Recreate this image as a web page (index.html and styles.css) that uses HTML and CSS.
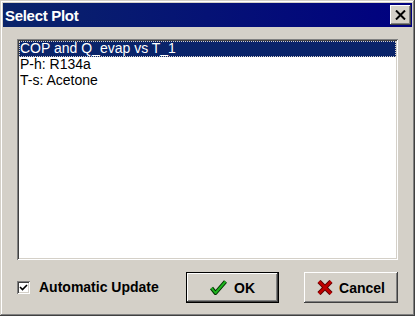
FILE: index.html
```html
<!DOCTYPE html>
<html>
<head>
    <title>Select Plot</title>
    <link rel="stylesheet" href="styles.css">
</head>
<body>
    <div class="window">
        <div class="titlebar">
            <span class="title">Select Plot</span>
            <button class="close-btn" type="button">
                <svg width="11" height="10" viewBox="0 0 11 10">
                    <path d="M1 0.5 L10 9.5 M10 0.5 L1 9.5" stroke="#000" stroke-width="2" fill="none"/>
                </svg>
            </button>
        </div>

        <div class="content">
            <div class="listbox">
                <div class="item selected">COP and Q_evap vs T_1</div>
                <div class="item">P-h: R134a</div>
                <div class="item">T-s: Acetone</div>
            </div>

            <div class="bottom-row">
                <label class="check">
                    <span class="check-box">
                        <svg width="9" height="9" viewBox="0 0 9 9">
                            <path d="M1 4 L3.5 6.5 L8 2" stroke="#000" stroke-width="1.6" fill="none"/>
                        </svg>
                    </span>
                    Automatic Update
                </label>

                <button class="win-btn default" type="button">
                    <svg width="17" height="15" viewBox="0 0 17 15">
                        <path d="M1.5 8 L5.5 13 L15.5 1.5" stroke="#003000" stroke-width="4" fill="none" stroke-linejoin="round"/>
                        <path d="M1.5 8 L5.5 13 L15.5 1.5" stroke="#1eb41e" stroke-width="2" fill="none" stroke-linejoin="round"/>
                    </svg>
                    OK
                </button>
                <button class="win-btn cancel" type="button">
                    <svg width="16" height="15" viewBox="0 0 16 15">
                        <path d="M2 1.5 L14 13.5 M14 1.5 L2 13.5" stroke="#5a0000" stroke-width="4.5" fill="none"/>
                        <path d="M2 1.5 L14 13.5 M14 1.5 L2 13.5" stroke="#c00000" stroke-width="2.5" fill="none"/>
                    </svg>
                    Cancel
                </button>
            </div>
        </div>
    </div>
</body>
</html>
```

FILE: styles.css
```css
body {
    margin: 0;
    background-color: #d4d0c8;
    font-family: "Liberation Sans", Arial, sans-serif;
    font-size: 14px;
}

.window {
    width: 415px;
    height: 316px;
    box-sizing: border-box;
    padding: 3px;
    background-color: #d4d0c8;
    box-shadow: inset -1px -1px #404040, inset 1px 1px #d4d0c8,
                inset -2px -2px #808080, inset 2px 2px #ffffff;
}

.titlebar {
    height: 24px;
    display: flex;
    align-items: center;
    justify-content: space-between;
    padding: 0 1px 0 2px;
    background: linear-gradient(to right, #0a246a, #000080);
}

.title {
    color: #ffffff;
    font-weight: bold;
    font-size: 15px;
    letter-spacing: -0.3px;
}

.close-btn {
    width: 21px;
    height: 20px;
    padding: 0;
    border: none;
    display: flex;
    align-items: center;
    justify-content: center;
    background-color: #d4d0c8;
    box-shadow: inset -1px -1px #404040, inset 1px 1px #ffffff,
                inset -2px -2px #808080, inset 2px 2px #d4d0c8;
}

.content {
    padding: 12px 14px 0 14px;
}

.listbox {
    height: 221px;
    box-sizing: border-box;
    padding: 2px;
    background-color: #ffffff;
    box-shadow: inset 1px 1px #808080, inset -1px -1px #ffffff,
                inset 2px 2px #404040, inset -2px -2px #d4d0c8;
}

.item {
    height: 16px;
    line-height: 14px;
    padding-left: 1px;
    color: #000000;
    white-space: nowrap;
}

.item.selected {
    background-color: #0a246a;
    color: #ffffff;
    outline: 1px dotted #d4d0c8;
    outline-offset: -1px;
}

.bottom-row {
    display: flex;
    align-items: flex-start;
    margin-top: 12px;
}

.check {
    flex: 1;
    display: flex;
    align-items: center;
    gap: 9px;
    margin-top: 7px;
    font-weight: bold;
}

.check-box {
    width: 13px;
    height: 13px;
    box-sizing: border-box;
    display: flex;
    align-items: center;
    justify-content: center;
    background-color: #ffffff;
    box-shadow: inset 1px 1px #808080, inset -1px -1px #ffffff,
                inset 2px 2px #404040, inset -2px -2px #d4d0c8;
}

.win-btn {
    width: 94px;
    height: 31px;
    padding: 0;
    border: none;
    display: flex;
    align-items: center;
    justify-content: center;
    gap: 7px;
    font-family: "Liberation Sans", Arial, sans-serif;
    font-size: 14px;
    font-weight: bold;
    color: #000000;
    background-color: #d4d0c8;
    box-shadow: inset -1px -1px #404040, inset 1px 1px #ffffff,
                inset -2px -2px #808080, inset 2px 2px #d4d0c8;
}

.win-btn.default {
    width: 93px;
    border: 1px solid #000000;
    box-sizing: border-box;
}

.win-btn.cancel {
    margin-left: 25px;
    gap: 6px;
}
```
